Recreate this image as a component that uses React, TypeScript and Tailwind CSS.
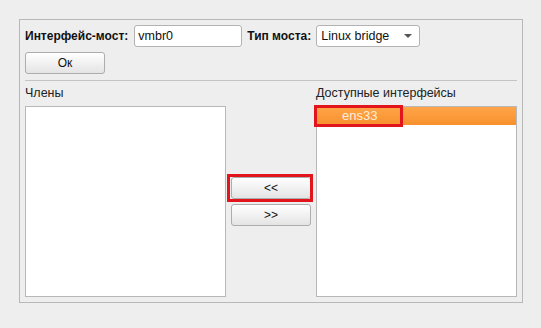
const font = { fontFamily: '"Liberation Sans", Arial, sans-serif' };

function Btn({ label, marked }: { label: string; marked?: boolean }) {
  return (
    <button className="relative w-[80px] h-[22px] rounded-[3px] border border-[#adadad] bg-gradient-to-b from-[#ffffff] to-[#e4e4e4] text-[12px] text-[#111] leading-none">
      {label}
      {marked && (
        <span className="absolute left-[-5px] top-[-4px] w-[86px] h-[28px] border-3 border-[#e3151c]" />
      )}
    </button>
  );
}

export default function App() {
  return (
    <div className="w-[541px] h-[328px] bg-[#eeeeee] pt-[19px] pl-[19px]" style={font}>
      <div className="w-[504px] h-[284px] border border-[#b8b8b8] p-[5px] flex flex-col">
        {/* bridge name + type */}
        <div className="flex items-center h-[22px] text-[12.5px]">
          <span className="font-bold text-[12px] text-[#111]">Интерфейс-мост:</span>
          <div className="ml-[6px] w-[108px] h-[22px] rounded-[3px] border border-[#b3b3b3] bg-white flex items-center pl-[3px] text-[#111]">
            vmbr0
          </div>
          <span className="ml-[5px] font-bold text-[12px] text-[#111]">Тип моста:</span>
          <div className="ml-[5px] w-[104px] h-[22px] rounded-[3px] border border-[#b3b3b3] bg-white flex items-center pl-[4px] pr-[7px] text-[#111]">
            <span className="flex-1">Linux bridge</span>
            <svg width="8" height="4" viewBox="0 0 8 4">
              <path d="M0 0h8L4 4z" fill="#555" />
            </svg>
          </div>
        </div>

        <div className="mt-[5px] flex">
          <Btn label="Ок" />
        </div>

        <div className="mt-[6px] h-px bg-[#c4c4c4]" />

        {/* members / available */}
        <div className="mt-[5px] flex flex-1 text-[12.5px] text-[#222]">
          <div className="w-[201px] flex flex-col">
            <div className="h-[14px] leading-[14px]">Члены</div>
            <div className="mt-[6px] flex-1 border border-[#b8b8b8] bg-white" />
          </div>

          <div className="w-[90px] flex flex-col items-center justify-center gap-[5px] pt-[20px]">
            <Btn label="<<" marked />
            <Btn label=">>" />
          </div>

          <div className="w-[201px] flex flex-col">
            <div className="h-[14px] leading-[14px]">Доступные интерфейсы</div>
            <div className="mt-[6px] flex-1 border border-[#b8b8b8] bg-white">
              <div className="relative h-[18px] bg-gradient-to-b from-[#ffa548] to-[#f8902c] pl-[25px] flex items-center text-[#ffeedd] text-[13px]">
                ens33
                <span className="absolute left-[-3px] top-[-2px] w-[89px] h-[22px] border-3 border-[#e3151c]" />
              </div>
            </div>
          </div>
        </div>
      </div>
    </div>
  );
}
